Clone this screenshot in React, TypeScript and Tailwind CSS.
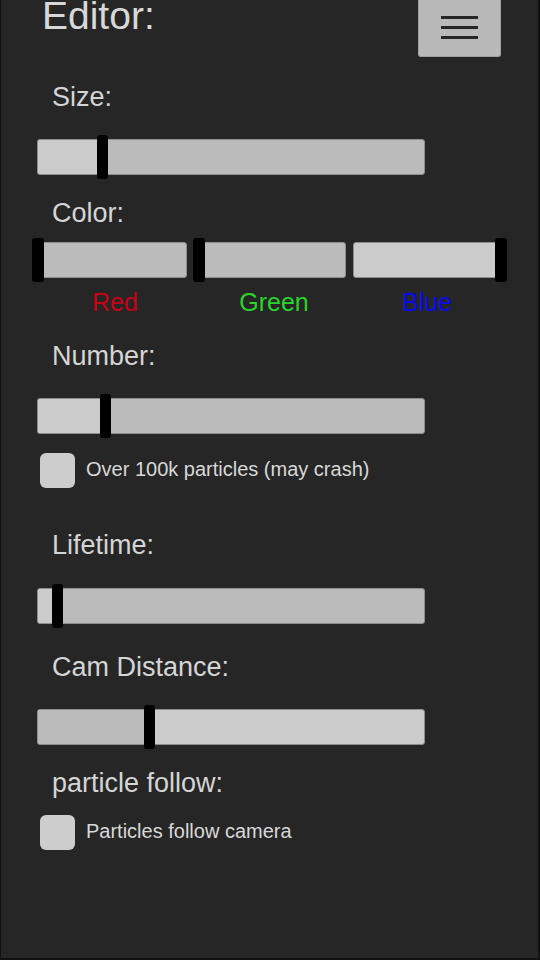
import React from "react";

const font = { fontFamily: '"Liberation Sans", Arial, sans-serif' };

function Slider({ handle, reversed = false }: { handle: number; reversed?: boolean }) {
  return (
    <div className="relative ml-[36px] w-[388px] py-[4px]">
      <div
        className={
          "h-[36px] w-full overflow-hidden rounded-[3px] border border-[#8e8e8e] " +
          (reversed ? "bg-[#cbcbcb]" : "bg-[#bbbbbb]")
        }
      >
        <div
          className={"h-full " + (reversed ? "bg-[#bbbbbb]" : "bg-[#cbcbcb]")}
          style={{ width: handle + 5 }}
        />
      </div>
      <div className="absolute top-0 h-[44px] w-[11px] rounded-[3px] bg-black" style={{ left: handle }} />
    </div>
  );
}

function ColorSlider({ width, handle, full = false, className = "" }: { width: number; handle: number; full?: boolean; className?: string }) {
  return (
    <div className={"relative py-[4px] " + className} style={{ width }}>
      <div
        className={
          "h-[36px] w-full rounded-[3px] border border-[#8e8e8e] " + (full ? "bg-[#cbcbcb]" : "bg-[#bbbbbb]")
        }
      />
      <div className="absolute top-0 h-[44px] w-[12px] rounded-[3px] bg-black" style={{ left: handle }} />
    </div>
  );
}

function Label({ children, className = "" }: { children: React.ReactNode; className?: string }) {
  return (
    <div className={"ml-[51px] text-[27px] leading-[26px] text-[#d5d5d5] " + className}>{children}</div>
  );
}

function Check({ label, className = "" }: { label: string; className?: string }) {
  return (
    <div className={"ml-[39px] flex items-center " + className}>
      <div className="h-[35px] w-[35px] rounded-[6px] bg-[#cdcdcd]" />
      <span className="mb-[4px] ml-[11px] text-[20px] leading-[20px] text-[#d8d8d8]">{label}</span>
    </div>
  );
}

export default function App() {
  return (
    <div
      className="flex h-[960px] w-[540px] flex-col overflow-hidden border-b-2 border-l border-r-2 border-[#121212] bg-[#262626]"
      style={font}
    >
      <div className="flex h-[57px] shrink-0 items-start">
        <div className="ml-[41px] mt-[-4px] text-[39px] leading-[39px] text-[#d8d8d8]">Editor:</div>
        <div className="ml-auto mr-[37px] flex h-[57px] w-[83px] flex-col items-center gap-[7px] rounded-b-[3px] border border-t-0 border-[#a0a0a0] bg-[#b9b9b9] pt-[16px]">
          <div className="h-[3px] w-[37px] bg-[#262626]" />
          <div className="h-[3px] w-[37px] bg-[#262626]" />
          <div className="h-[3px] w-[37px] bg-[#262626]" />
        </div>
      </div>

      <Label className="mt-[27px]">Size:</Label>
      <div className="mt-[25px]">
        <Slider handle={60} />
      </div>

      <Label className="mt-[21px]">Color:</Label>
      <div className="ml-[37px] mt-[12px] flex">
        <ColorSlider width={149} handle={-6} />
        <ColorSlider width={148} handle={-5} className="ml-[11px]" />
        <ColorSlider width={148} handle={142} full className="ml-[7px]" />
      </div>
      <div className="ml-[37px] mt-[8px] flex text-[25px] leading-[25px]">
        <div className="w-[149px] pl-[5px] text-center text-[#c80014]">Red</div>
        <div className="ml-[11px] w-[148px] pl-[4px] text-center text-[#2ad42a]">Green</div>
        <div className="ml-[7px] w-[148px] text-center text-[#0a0aee]">Blue</div>
      </div>

      <Label className="mt-[28px]">Number:</Label>
      <div className="mt-[25px]">
        <Slider handle={63} />
      </div>
      <Check label="Over 100k particles (may crash)" className="mt-[15px]" />

      <Label className="mt-[44px]">Lifetime:</Label>
      <div className="mt-[26px]">
        <Slider handle={15} />
      </div>

      <Label className="mt-[26px]">Cam Distance:</Label>
      <div className="mt-[25px]">
        <Slider handle={107} reversed />
      </div>

      <Label className="mt-[21px]">particle follow:</Label>
      <Check label="Particles follow camera" className="mt-[19px]" />
    </div>
  );
}
